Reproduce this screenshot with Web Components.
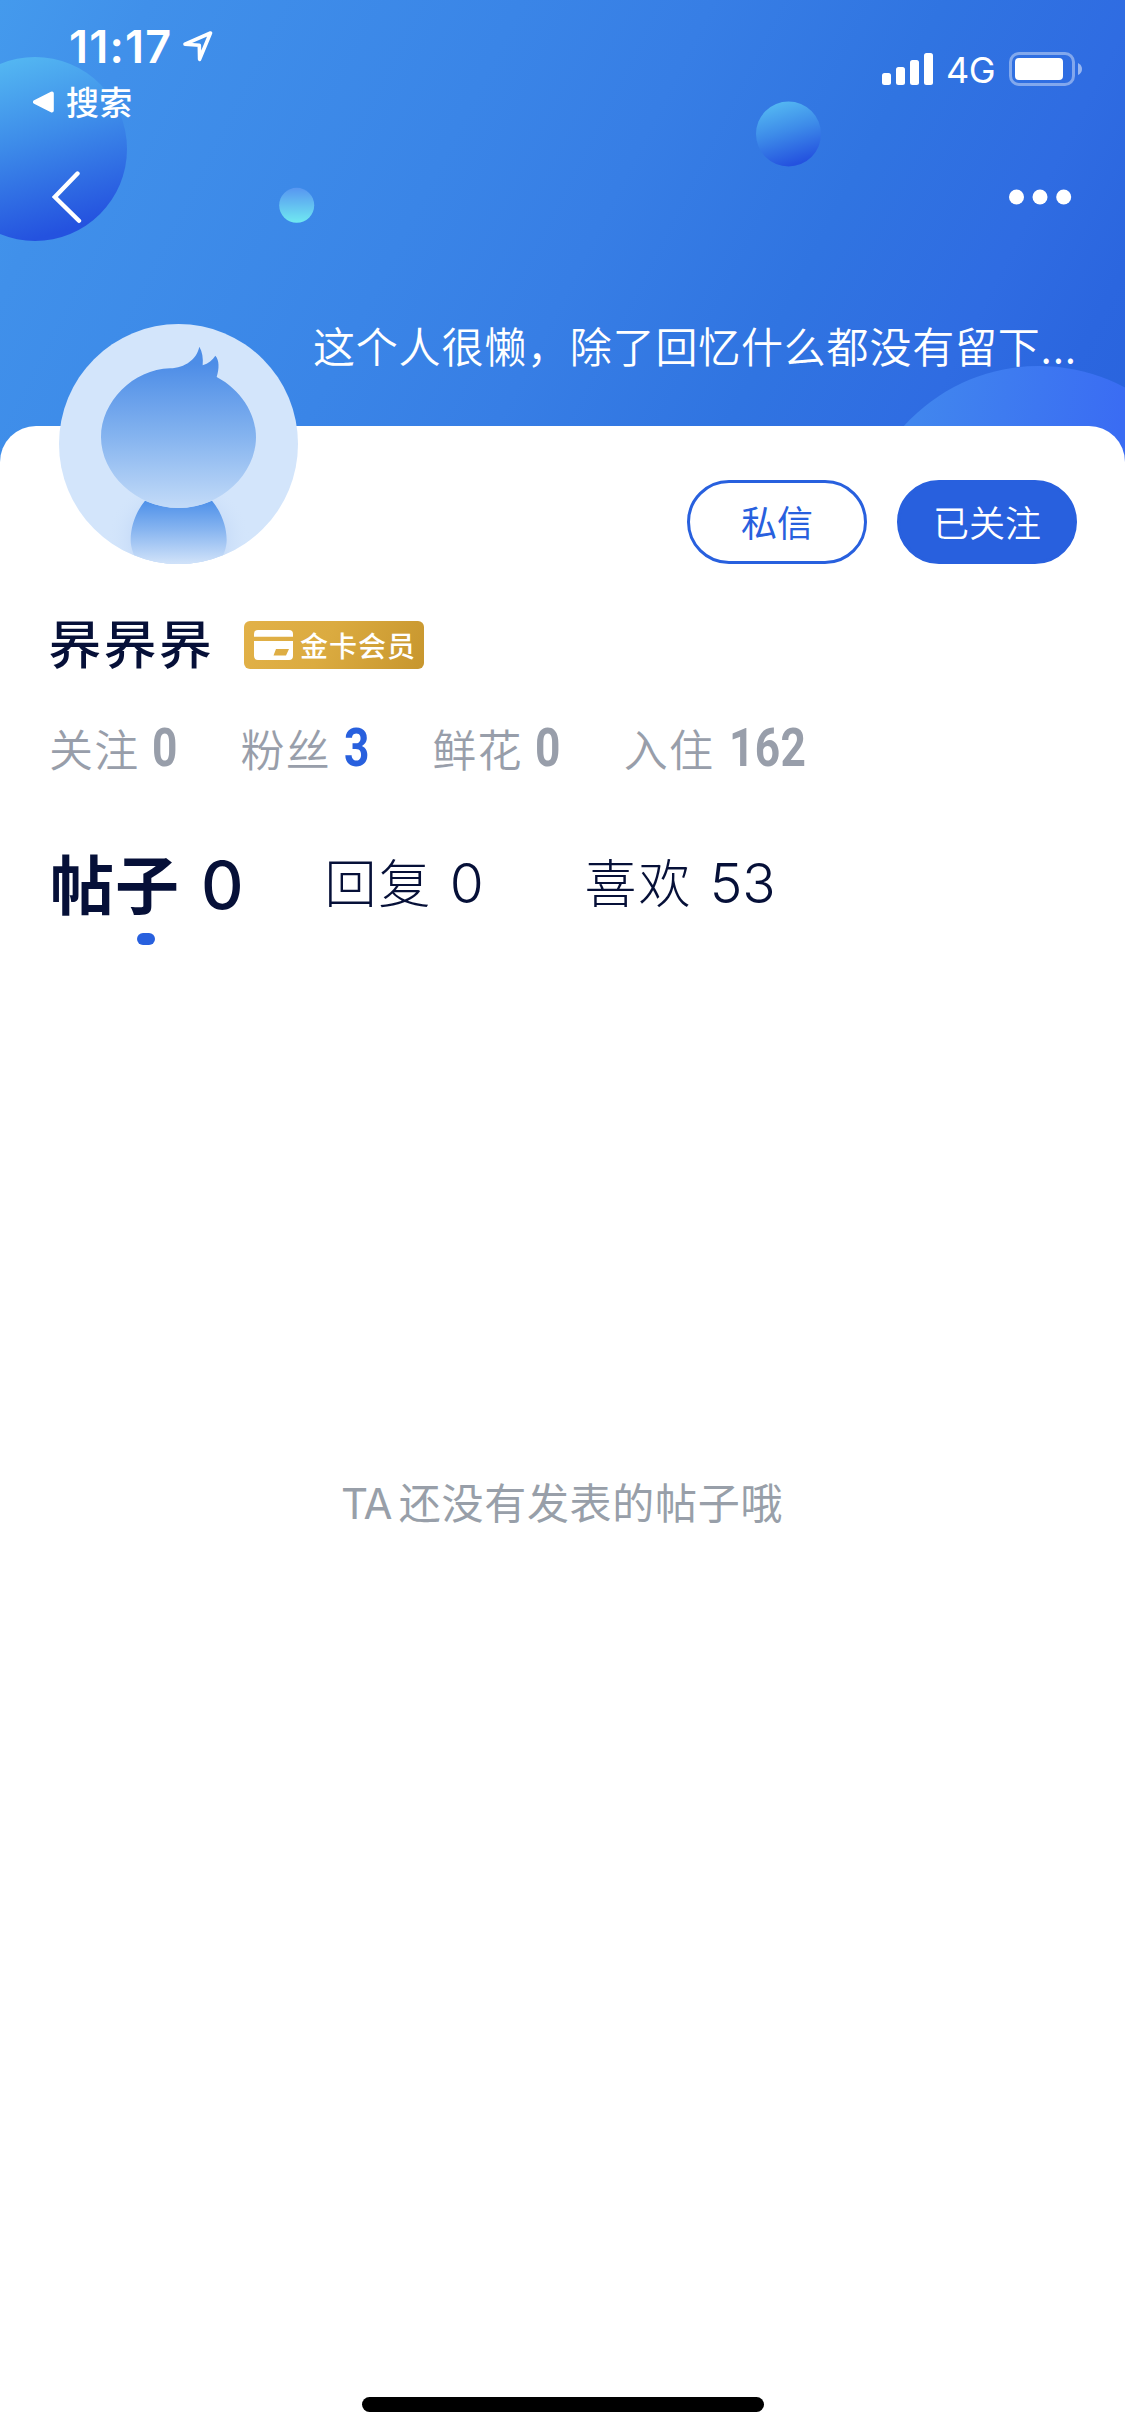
<!DOCTYPE html>
<html lang="zh-CN">
<head>
<meta charset="utf-8">
<title>个人主页</title>
<style>
html,body{margin:0;padding:0;background:#fff}
body{width:1125px;font-family:"Noto Sans CJK SC",sans-serif}
</style>
</head>
<body>
<profile-page></profile-page>
<script>
const define = (name, html) => {
  const t = document.createElement('template');
  t.innerHTML = html;
  customElements.define(name, class extends HTMLElement {
    constructor() {
      super();
      this.attachShadow({mode: 'open'}).appendChild(t.content.cloneNode(true));
    }
  });
};

define('status-bar', `
<style>
:host{display:flex;justify-content:space-between;height:132px;color:#fff}
.left{display:flex;flex-direction:column;padding-left:33px}
.time{display:flex;align-items:center;gap:13px;height:60px;padding:17px 0 0 36px}
.time span{font:600 45px/60px Inter,sans-serif;letter-spacing:1.2px;width:101px;white-space:nowrap}
.time svg{margin-bottom:1px}
.back{display:flex;align-items:center;gap:12px;height:49px}
.back span{font:500 33px/49px "Noto Sans CJK SC",sans-serif;letter-spacing:.2px}
.right{display:flex;align-items:center;height:38px;padding:50px 43px 0 0}
.right span{font:400 36px/38px Inter,sans-serif;margin:2px 15px 0 12px;width:48px;white-space:nowrap;letter-spacing:-.6px}
</style>
<div class="left">
  <div class="time"><span>11:17</span>
    <svg width="30" height="31" viewBox="0 0 30 31" fill="none" stroke="#fff" stroke-width="3.6" stroke-linejoin="round"><path d="M2 13.200 L27.500 2 L16.600 28.300 L16.300 14.200 Z"/></svg>
  </div>
  <div class="back">
    <svg width="21" height="22" viewBox="0 0 21 22" fill="#fff" stroke="#fff" stroke-width="4" stroke-linejoin="round"><path d="M2 11 L18.800 2.500 V19.500 Z"/></svg>
    <span>搜索</span>
  </div>
</div>
<div class="right">
  <svg width="52" height="32" viewBox="0 0 52 32" fill="#fff"><rect y="20" width="9" height="12" rx="2.500"/><rect x="14" y="14" width="9" height="18" rx="2.500"/><rect x="28" y="7" width="9" height="25" rx="2.500"/><rect x="42" y="0" width="9" height="32" rx="2.500"/></svg>
  <span>4G</span>
  <svg width="73" height="34" viewBox="0 0 73 34"><rect x="1.500" y="1.500" width="63" height="31" rx="8.500" fill="none" stroke="#fff" stroke-opacity=".4" stroke-width="3"/><rect x="6" y="6" width="48" height="22" rx="4" fill="#fff"/><path d="M69 11 Q73 13 73 17 Q73 21 69 23 Z" fill="#fff" fill-opacity=".5"/></svg>
</div>`);

define('nav-bar', `
<style>
:host{display:flex;justify-content:space-between;align-items:center;height:130px;padding:0 53px 2px 52px}
</style>
<svg width="30" height="54" viewBox="0 0 30 54" fill="none" stroke="#fff" stroke-width="4.400" stroke-linecap="round" stroke-linejoin="miter"><path d="M25.500 3.500 L2.800 27 L27 50.800"/></svg>
<svg width="63" height="16" viewBox="0 0 63 16" fill="#fff"><circle cx="7.500" cy="8" r="7.500"/><circle cx="31" cy="8" r="7.500"/><circle cx="54.700" cy="8" r="7.500"/></svg>`);

define('header-backdrop', `
<style>
:host{display:block;position:absolute;inset:0;z-index:-1;overflow:hidden;background:linear-gradient(117deg,#449aed 0%,#4090ea 11%,#3a85e7 38%,#377ee5 52%,#3074e1 69%,#2f6ce2 83%,#2b66df 92%,#2963dd 100%)}
svg{display:block}
</style>
<svg width="1125" height="480" viewBox="0 0 1125 480">
<defs>
<linearGradient id="a" x1=".35" y1="0" x2=".65" y2="1"><stop offset="0" stop-color="#54b8f2"/><stop offset=".45" stop-color="#3d8be9"/><stop offset=".95" stop-color="#2452df"/></linearGradient>
<linearGradient id="b" x1="0" y1="0" x2="0" y2="1"><stop offset="0" stop-color="#5796f1"/><stop offset="1" stop-color="#70e9f1"/></linearGradient>
<linearGradient id="c" gradientUnits="userSpaceOnUse" x1="915" y1="415" x2="1118" y2="450"><stop offset="0" stop-color="#4186ee"/><stop offset="1" stop-color="#3a6cf3"/></linearGradient>
</defs>
<circle cx="35" cy="149" r="92" fill="url(#a)"/>
<circle cx="296.700" cy="205.300" r="17.500" fill="url(#b)"/>
<circle cx="788.500" cy="134" r="32.500" fill="url(#a)"/>
<circle cx="1039" cy="548" r="182" fill="url(#c)"/>
</svg>`);

define('profile-header', `
<style>
:host{display:block;position:relative;z-index:0;height:480px}
.bio{margin:0;padding:49px 0 0 313px;font:350 42px/64px "Noto Sans CJK SC",sans-serif;letter-spacing:.8px;color:#fff;white-space:nowrap}
</style>
<header-backdrop></header-backdrop>
<status-bar></status-bar>
<nav-bar></nav-bar>
<p class="bio"><slot></slot></p>`);

define('user-avatar', `
<style>:host{display:block;width:239px;height:240px}svg{display:block}</style>
<svg width="239" height="240" viewBox="177 72 717 720">
<defs>
<linearGradient id="h" gradientUnits="userSpaceOnUse" x1="0" y1="190" x2="0" y2="624"><stop offset="0" stop-color="#4d8de7"/><stop offset=".5" stop-color="#84b3ef"/><stop offset="1" stop-color="#c3dbf8"/></linearGradient>
<linearGradient id="n" gradientUnits="userSpaceOnUse" x1="0" y1="604" x2="0" y2="790"><stop offset="0" stop-color="#4f91e9"/><stop offset=".45" stop-color="#86b4f0"/><stop offset="1" stop-color="#d0e2f9"/></linearGradient>
<radialGradient id="s"><stop offset=".55" stop-color="#c2d8f7"/><stop offset="1" stop-color="#d3e5fb" stop-opacity="0"/></radialGradient>
<clipPath id="k"><ellipse cx="535.500" cy="432" rx="358.500" ry="360"/></clipPath>
</defs>
<g clip-path="url(#k)">
<rect x="177" y="72" width="717" height="720" fill="#d3e5fb"/>
<ellipse cx="536" cy="715" rx="215" ry="185" fill="url(#s)"/>
<path d="M435 602 Q536 646 636 602 C664 636 680 680 680 720 C680 745 670 765 658 792 H414 C402 765 392 745 392 720 C392 680 407 636 435 602Z" fill="url(#n)"/>
<path d="M510 205 C556 203 590 178 598 140 C607 155 610 175 608 196 C625 191 638 180 646 167 C658 180 658 205 650 231 C720 268 768 338 768 412 C768 520 665 624 536 624 C407 624 303 520 303 412 C303 305 400 208 510 205Z" fill="url(#h)"/>
</g>
</svg>`);

define('pill-button', `
<style>
:host{display:flex;justify-content:center;align-items:center;box-sizing:border-box;width:180px;height:84px;padding-bottom:3px;border:3px solid #2860de;border-radius:42px;color:#2860de;background:#fff;font:400 36px/50px "Noto Sans CJK SC",sans-serif}
:host([filled]){background:#2860de;color:#fff;font-weight:350}
</style><slot></slot>`);

define('member-badge', `
<style>
:host{display:flex;align-items:center;gap:7px;box-sizing:border-box;width:180px;height:48px;padding-left:10px;border-radius:6px;background:linear-gradient(115deg,#e2b148 0%,#dbab40 45%,#c7962e 100%);color:#fff;font:500 28px/44px "Noto Sans CJK SC",sans-serif;letter-spacing:1px;white-space:nowrap}
span{margin-top:-1px}
</style>
<svg width="39" height="30" viewBox="0 0 39 30" fill="#fff"><path d="M4 0 H35 Q39 0 39 4 V6.800 H0 V4 Q0 0 4 0Z"/><path fill-rule="evenodd" d="M0 11 H39 V26 Q39 30 35 30 H4 Q0 30 0 26Z M22 19 L19.500 25.500 H32 L35 19Z"/></svg>
<span><slot></slot></span>`);

define('stat-item', `
<style>
:host{display:flex;width:191.600px;color:#989eaa;white-space:nowrap}
.label{flex:none;font:350 44px/66px "Noto Sans CJK SC",sans-serif;letter-spacing:1.2px;width:103px}
.num{flex:none;font:700 54px/66px Roboto,sans-serif;transform:scaleX(.82);transform-origin:0 50%;letter-spacing:.4px}
:host([active]) .num{color:#2860de}
:host([wide]) .num{margin-left:2px}
</style>
<span class="label"><slot name="label"></slot></span><span class="num"><slot></slot></span>`);

define('tab-item', `
<style>
:host{display:flex;flex-direction:column;align-items:center;color:#061038;white-space:nowrap}
.row{display:flex;align-items:baseline;height:101px}
.label{font:300 52px/98px "Noto Sans CJK SC",sans-serif;letter-spacing:2px}
.num{font:300 55px/98px Inter,sans-serif;margin-left:17px}
.dot{width:18px;height:12px;border-radius:6px;background:transparent}
:host([active]) .label{font-weight:700;font-size:64px;letter-spacing:1px}
:host([active]) .num{font-weight:500;font-size:66px;margin-left:21px}
:host([active]) .dot{background:#2860de;margin-right:2px}
</style>
<div class="row"><span class="label"><slot name="label"></slot></span><span class="num"><slot></slot></span></div>
<div class="dot"></div>`);

define('empty-state', `
<style>
:host{display:flex;justify-content:center;align-items:baseline;gap:7px;color:#989fa9;font:400 42px/64px "Noto Sans CJK SC",sans-serif;letter-spacing:.7px;white-space:nowrap}
.latin{font-family:Inter,sans-serif;letter-spacing:-.8px}
</style><span class="latin"><slot name="prefix"></slot></span><span><slot></slot></span>`);

define('home-indicator', `
<style>:host{display:block;width:402px;height:15px;border-radius:7.500px;background:#000;margin:auto auto 24px 362px}</style>`);

define('profile-page', `
<style>
:host{display:flex;flex-direction:column;width:1125px;height:2436px;overflow:hidden;background:#fff}
main{display:flex;flex-direction:column;position:relative;z-index:1;flex:1;margin-top:-54px;background:#fff;border-radius:36px 36px 0 0}
.top{display:flex;align-items:flex-end;height:138px;padding:0 48px 0 59px}
.top pill-button{margin-left:30px}
.top user-avatar{margin-right:auto}
.name{display:flex;align-items:center;height:78px;padding:42px 0 0 49px}
h1{margin:-6px 0 0;width:195px;font:500 52px/78px "Noto Sans CJK SC",sans-serif;letter-spacing:3.200px;color:#061038;white-space:nowrap}
.stats{display:flex;padding:31px 0 0 49px}
.tabs{display:flex;align-items:flex-start;padding:51px 0 0 50px}
.tabs tab-item:nth-child(2){margin-left:81px}
.tabs tab-item:nth-child(3){margin-left:101px}
empty-state{margin-top:524px;padding-right:1px}
</style>
<profile-header>这个人很懒，除了回忆什么都没有留下...</profile-header>
<main>
  <section class="top"><user-avatar></user-avatar><pill-button>私信</pill-button><pill-button filled>已关注</pill-button></section>
  <section class="name"><h1>昦昦昦</h1><member-badge>金卡会员</member-badge></section>
  <section class="stats">
    <stat-item><span slot="label">关注</span>0</stat-item>
    <stat-item active><span slot="label">粉丝</span>3</stat-item>
    <stat-item><span slot="label">鲜花</span>0</stat-item>
    <stat-item wide><span slot="label">入住</span>162</stat-item>
  </section>
  <nav class="tabs">
    <tab-item active><span slot="label">帖子</span>0</tab-item>
    <tab-item><span slot="label">回复</span>0</tab-item>
    <tab-item><span slot="label">喜欢</span>53</tab-item>
  </nav>
  <empty-state><span slot="prefix">TA</span>还没有发表的帖子哦</empty-state>
  <home-indicator></home-indicator>
</main>`);
</script>
</body>
</html>
